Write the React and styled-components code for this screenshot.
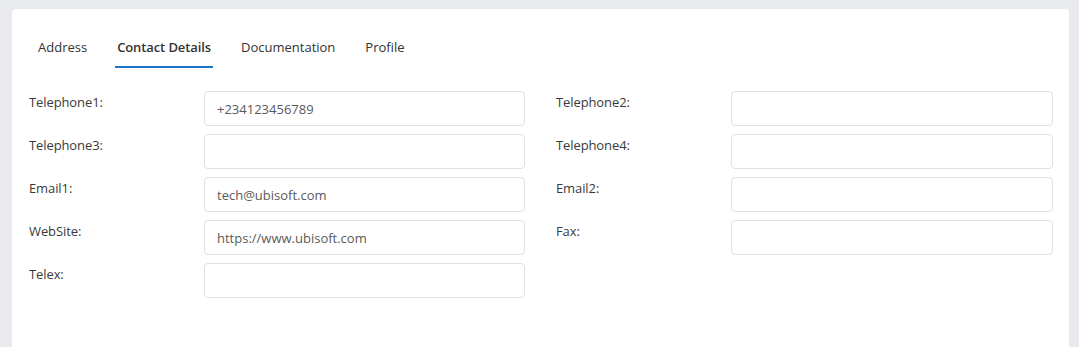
import styled, { createGlobalStyle } from 'styled-components';

const GlobalStyle = createGlobalStyle`
  html, body {
    margin: 0;
    padding: 0;
    background: #e9eaed;
    font-family: "Open Sans", "Noto Sans", sans-serif;
  }
  * { box-sizing: border-box; }
`;

const Page = styled.div`
  padding: 9px 10px 0 12px;
  height: 347px;
  overflow: hidden;
`;

const Card = styled.div`
  background: #fff;
  border-radius: 4px;
  height: 360px;
  padding: 0 16px 0 17px;
`;

const Tabs = styled.nav`
  display: flex;
  gap: 26px;
  padding: 0 0 0 7px;
  height: 59px;
  align-items: flex-end;
`;

const Tab = styled.div`
  padding: 0 2px;
  height: 30px;
  line-height: 18px;
  font-size: 13px;
  color: #333;
  font-weight: ${p => (p.$active ? 600 : 400)};
  border-bottom: 2px solid ${p => (p.$active ? '#1a73c8' : 'transparent')};
  letter-spacing: ${p => (p.$active ? '-0.1px' : '0')};
`;

const Form = styled.div`
  display: grid;
  grid-template-columns: 496px 1fr;
  column-gap: 31px;
  row-gap: 8px;
  padding-top: 23px;
`;

const Field = styled.div`
  display: grid;
  grid-template-columns: 175px 1fr;
  align-items: start;
`;

const Label = styled.label`
  font-size: 13px;
  color: #3a3a3a;
  padding-top: 2px;
  letter-spacing: -0.1px;
`;

const Input = styled.input`
  height: 35px;
  width: 100%;
  border: 1px solid #dfe1e4;
  border-radius: 4px;
  padding: 0 12px;
  font-family: inherit;
  font-size: 13px;
  color: #5a5a5a;
  outline: none;
  background: #fff;
`;

const fields = [
  ['Telephone1:', '+234123456789'],
  ['Telephone2:', ''],
  ['Telephone3:', ''],
  ['Telephone4:', ''],
  ['Email1:', 'tech@ubisoft.com'],
  ['Email2:', ''],
  ['WebSite:', 'https://www.ubisoft.com'],
  ['Fax:', ''],
  ['Telex:', ''],
];

const App = () => {
  return (
    <Page>
      <GlobalStyle />
      <Card>
        <Tabs>
          <Tab>Address</Tab>
          <Tab $active>Contact Details</Tab>
          <Tab>Documentation</Tab>
          <Tab>Profile</Tab>
        </Tabs>
        <Form>
          {fields.map(([label, value]) => (
            <Field key={label}>
              <Label>{label}</Label>
              <Input defaultValue={value} />
            </Field>
          ))}
        </Form>
      </Card>
    </Page>
  );
};

export default App;
